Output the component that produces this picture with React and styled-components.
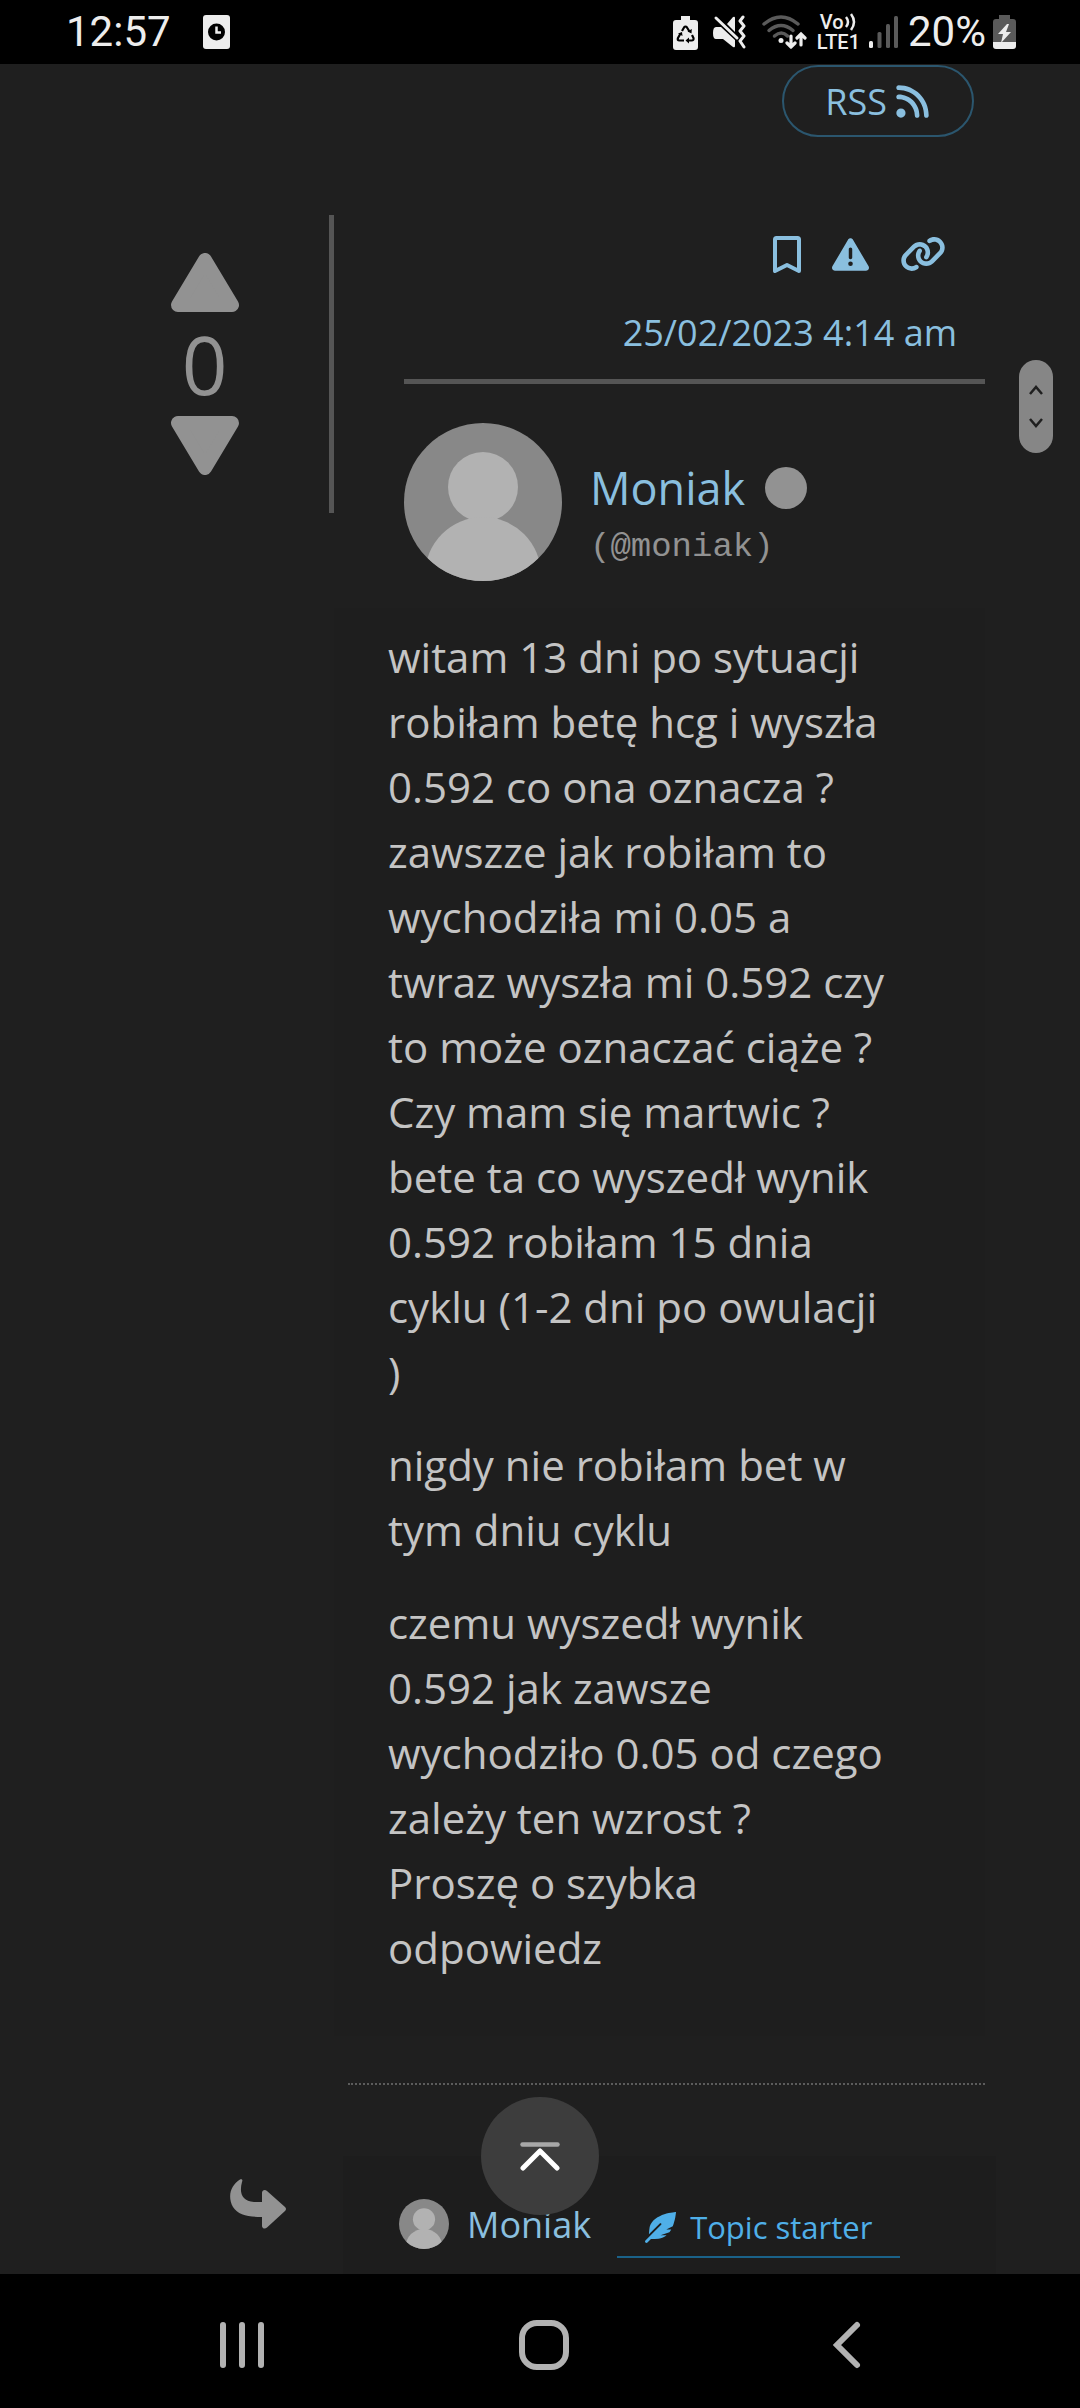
import styled, { createGlobalStyle } from "styled-components"
import { FaTriangleExclamation, FaLink, FaRss } from "react-icons/fa6"
import { FaFeatherAlt } from "react-icons/fa"

const GlobalStyle = createGlobalStyle`
    * {
        box-sizing: border-box;
    }

    body {
        margin: 0;
        background-color: #1f1f1f;
        font-family: "Open Sans", "Noto Sans", sans-serif;
        color: #c4c4c4;
    }

    button {
        padding: 0;
        border: none;
        background: none;
        color: inherit;
        font: inherit;
        cursor: pointer;
    }

    a {
        color: #8abfdf;
        text-decoration: none;
    }

    svg {
        display: block;
    }
`

const Page = styled.div`
    min-height: 100vh;
    display: flex;
    flex-direction: column;
    position: relative;
`

const StatusBar = styled.header`
    height: 64px;
    padding: 0 64px 0 66px;
    display: flex;
    align-items: center;
    justify-content: space-between;
    background-color: black;
    color: #ededed;
    font-family: Roboto, sans-serif;
    font-size: 42px;
    line-height: 64px;
`

const StatusGroup = styled.div`
    display: flex;
    align-items: center;
    gap: ${({gap}) => gap}px;
`

const Carrier = styled.div`
    display: flex;
    flex-direction: column;
    font-size: 20px;
    font-weight: 500;
    line-height: 20px;
`

const CarrierTop = styled.span`
    display: flex;
    align-items: center;
    padding-left: 3px;
`

const Main = styled.main`
    flex: 1;
    padding-right: 95px;
`

const Toolbar = styled.div`
    display: flex;
    justify-content: flex-end;
    padding: 1px 11px 0 0;
`

const RssLink = styled.a`
    height: 72px;
    padding: 0 41px;
    display: flex;
    align-items: center;
    gap: 7px;
    border: 2px solid #2b566e;
    border-radius: 36px;
    font-size: 36px;
`

const Post = styled.article`
    display: flex;
    align-items: flex-start;
    margin-top: 78px;
`

const VoteBox = styled.div`
    width: 334px;
    padding: 38px 0 38px 80px;
    display: flex;
    flex-direction: column;
    align-items: center;
    border-right: 5px solid #555;
    color: #929292;
`

const VoteCount = styled.span`
    font-size: 80px;
    line-height: 104px;
`

const PostMain = styled.div`
    flex: 1;
    min-width: 0;
`

const PostHead = styled.div`
    margin-left: 70px;
    padding: 20px 0 20px;
    display: flex;
    flex-direction: column;
    align-items: flex-end;
    border-bottom: 5px solid #555;
`

const Actions = styled.div`
    height: 38px;
    padding-right: 39px;
    display: flex;
    align-items: center;
    gap: 31px;
    color: #8abfdf;
`

const PostDate = styled.a`
    margin-top: 34px;
    padding-right: 28px;
    font-size: 36px;
    line-height: 52px;
`

const Author = styled.div`
    margin: 39px 0 27px 70px;
    display: flex;
    align-items: flex-end;
    gap: 28px;
`

const AuthorInfo = styled.div`
    padding-bottom: 7px;
`

const AuthorName = styled.div`
    display: flex;
    align-items: center;
    gap: 20px;
    font-size: 45px;
    line-height: 64px;
`

const Offline = styled.span`
    width: 42px;
    height: 42px;
    border-radius: 50%;
    background-color: #929292;
`

const Handle = styled.div`
    color: #929292;
    font-family: "Liberation Mono", monospace;
    font-size: 34px;
    line-height: 54px;
`

const PostBody = styled.div`
    padding: 16px 98px 28px 54px;
    background-color: #1e1e1e;
    font-size: 42px;
    line-height: 65px;

    &>p {
        margin: 0 0 28px;
    }
`

const Separator = styled.hr`
    margin: 47px 0 0 14px;
    border: none;
    border-top: 2px dotted #5c5c5c;
`

const Reply = styled.article`
    display: flex;
    align-items: stretch;
    margin: 71px -11px 0 0;
`

const ReplyAside = styled.div`
    width: 343px;
    padding: 23px 56px 0 0;
    display: flex;
    justify-content: flex-end;
    color: #929292;
`

const ReplyBox = styled.div`
    flex: 1;
    height: 118px;
    padding: 26px 0 0 56px;
    display: flex;
    align-items: flex-start;
    background-color: #1d1d1d;
`

const ReplyAuthor = styled.a`
    height: 84px;
    display: flex;
    align-items: center;
    gap: 18px;
    font-size: 36px;
`

const TopicStarter = styled.span`
    height: 76px;
    margin-left: 26px;
    padding: 16px 28px 0;
    display: flex;
    align-items: center;
    gap: 14px;
    border-bottom: 2px solid #1a6289;
    color: #4fafe8;
    font-size: 31px;
`

const ScrollThumb = styled.div`
    position: absolute;
    top: 360px;
    right: 27px;
    width: 34px;
    height: 93px;
    border-radius: 17px;
    background-color: #868686;
`

const ToTop = styled.button`
    position: absolute;
    bottom: 194px;
    left: 50%;
    width: 118px;
    height: 118px;
    margin-left: -59px;
    border-radius: 50%;
    background-color: #3d3d3d;
    display: flex;
    align-items: center;
    justify-content: center;
`

const NavBar = styled.nav`
    height: 135px;
    padding: 7px 218px 0;
    display: flex;
    align-items: center;
    justify-content: space-between;
    background-color: black;
    color: #b2b2b2;
`

const paragraphs = [
    "witam 13 dni po sytuacji robiłam betę hcg i wyszła 0.592 co ona oznacza ? zawszze jak robiłam to wychodziła mi 0.05 a twraz wyszła mi 0.592 czy to może oznaczać ciąże ? Czy mam się martwic ? bete ta co wyszedł wynik 0.592 robiłam 15 dnia cyklu (1-2 dni po owulacji )",
    "nigdy nie robiłam bet w tym dniu cyklu",
    "czemu wyszedł wynik 0.592 jak zawsze wychodziło 0.05 od czego zależy ten wzrost ? Proszę o szybka odpowiedz"
]

const Avatar = ({size, id}) => {
    return <svg width={size} height={size} viewBox="0 0 158 158">
        <clipPath id={id}><circle cx="79" cy="79" r="79" /></clipPath>
        <g clipPath={`url(#${id})`}>
            <rect width="158" height="158" fill="#888" />
            <circle cx="79" cy="64" r="35" fill="#b2b2b2" />
            <circle cx="79" cy="152" r="58" fill="#b2b2b2" />
        </g>
    </svg>
}

const Triangle = ({down}) => {
    return <svg width="70" height="59" viewBox="0 0 70 59">
        <path
            transform={down ? "rotate(180 35 29.5)" : undefined}
            d="M8 52 35 7 62 52Z"
            fill="currentColor" stroke="currentColor" strokeWidth="14" strokeLinejoin="round"
        />
    </svg>
}

const ClockIcon = () => {
    return <svg width="27" height="34" viewBox="0 0 27 34">
        <rect width="27" height="34" rx="3" fill="currentColor" />
        <circle cx="13.500" cy="17" r="8.500" fill="black" />
        <path d="M13.500 11.500V17.500H18" fill="none" stroke="currentColor" strokeWidth="2.500" />
    </svg>
}

const RecycleBattery = () => {
    return <svg width="25" height="35" viewBox="0 0 25 35">
        <path d="M8 1h9v4h5a3 3 0 0 1 3 3v24a3 3 0 0 1-3 3H3a3 3 0 0 1-3-3V8a3 3 0 0 1 3-3h5z" fill="currentColor" />
        <g fill="none" stroke="black" strokeWidth="2.200">
            <path d="M9 16l2-3.500q1.500-2 3 0l2.500 4" />
            <path d="M19 20l1.500 3q.5 2.500-2 2.500h-4" />
            <path d="M11 25.500H6.500q-2.500 0-1.500-2.500l2.500-4.500" />
        </g>
        <path d="M18.800 14l-.3 4.500-4-2zM16 22.500v6l-3.500-3zM9.500 21l-.5-4-4 1.500z" fill="black" />
    </svg>
}

const MuteIcon = () => {
    return <svg width="34" height="34" viewBox="0 0 34 34">
        <path d="M3 12h5l14 13v6q0 2-2 1L10 24H3q-3 0-3-6t3-6zM14 9l6-7q2-1 2 1v14z" fill="currentColor" />
        <path d="M3 3l21 20" stroke="currentColor" strokeWidth="3" strokeLinecap="round" />
        <path d="M30 2l-3 4 4 5-4 5 4 5-4 5 4 6" fill="none" stroke="currentColor" strokeWidth="3" strokeLinecap="round" strokeLinejoin="round" />
    </svg>
}

const WifiIcon = () => {
    return <svg width="45" height="34" viewBox="0 0 45 34">
        <g fill="none" stroke="#5a5a5a" strokeWidth="3.500" strokeLinecap="round">
            <path d="M2 9q17-14 34 0" />
            <path d="M7 15.500q12-10 24 0" />
            <path d="M12.500 21q7-6 13 0" />
        </g>
        <circle cx="19" cy="25.500" r="2.500" fill="currentColor" />
        <g fill="none" stroke="currentColor" strokeWidth="3.200" strokeLinecap="round">
            <path d="M29 21v11M25 28l4 4 4-4" />
            <path d="M39 30V19M35 23l4-4 4 4" />
        </g>
    </svg>
}

const SignalIcon = () => {
    return <svg width="29" height="32" viewBox="0 0 29 32">
        <rect y="25" width="4" height="7" rx="1.500" fill="currentColor" />
        <rect x="8.500" y="16" width="4" height="16" rx="1.500" fill="#5a5a5a" />
        <rect x="17" y="8" width="4" height="24" rx="1.500" fill="#5a5a5a" />
        <rect x="25" y="0" width="4" height="32" rx="1.500" fill="#5a5a5a" />
    </svg>
}

const BatteryIcon = () => {
    return <svg width="23" height="34" viewBox="0 0 23 34">
        <path d="M6 0h11v4h3a3 3 0 0 1 3 3v20H0V7a3 3 0 0 1 3-3h3z" fill="#5a5a5a" />
        <path d="M0 27h23v4a3 3 0 0 1-3 3H3a3 3 0 0 1-3-3z" fill="currentColor" />
        <path d="M14 9 5 19h5L8 28l10-11h-5l3-8z" fill="currentColor" />
    </svg>
}

const BookmarkIcon = () => {
    return <svg width="28" height="37" viewBox="0 0 28 37">
        <path d="M2 3.500Q2 2 3.500 2h21Q26 2 26 3.500V35L14 29 2 35Z" fill="none" stroke="currentColor" strokeWidth="4" strokeLinejoin="round" />
    </svg>
}

const ReplyArrow = () => {
    return <svg width="57" height="50" viewBox="0 0 57 50">
        <path d="M10 .5C12 0 13 1 12 3 9 14 12 22 24 23H32V14C32 11 35 10 37 12L55 28Q57 30 55 32L37 48.500C35 50.500 32 49.500 32 47V38C18 38 8 36 3 28-3 17 1 6 10 .5Z" fill="currentColor" />
    </svg>
}

const App = () => {
    return <Page>
        <GlobalStyle />
        <StatusBar>
            <StatusGroup gap={32}>
                <span>12:57</span>
                <ClockIcon />
            </StatusGroup>
            <StatusGroup gap={10}>
                <StatusGroup gap={15}>
                    <RecycleBattery />
                    <MuteIcon />
                    <WifiIcon />
                </StatusGroup>
                <StatusGroup gap={9}>
                    <Carrier>
                        <CarrierTop>
                            Vo
                            <svg width="14" height="18" viewBox="0 0 14 18">
                                <path d="M2 4q4 5 0 10M7 1q6 8 0 16" fill="none" stroke="currentColor" strokeWidth="2.500" />
                            </svg>
                        </CarrierTop>
                        <span>LTE1</span>
                    </Carrier>
                    <SignalIcon />
                </StatusGroup>
                <StatusGroup gap={7}>
                    <span>20%</span>
                    <BatteryIcon />
                </StatusGroup>
            </StatusGroup>
        </StatusBar>

        <Main>
            <Toolbar>
                <RssLink href="#rss">RSS <FaRss size={37} /></RssLink>
            </Toolbar>

            <Post>
                <VoteBox>
                    <button aria-label="Vote up"><Triangle /></button>
                    <VoteCount>0</VoteCount>
                    <button aria-label="Vote down"><Triangle down /></button>
                </VoteBox>
                <PostMain>
                    <PostHead>
                        <Actions>
                            <button aria-label="Bookmark"><BookmarkIcon /></button>
                            <button aria-label="Report"><FaTriangleExclamation size={37} /></button>
                            <button aria-label="Link"><FaLink size={46} /></button>
                        </Actions>
                        <PostDate href="#post">25/02/2023 4:14 am</PostDate>
                    </PostHead>
                    <Author>
                        <Avatar size={158} id="avatar" />
                        <AuthorInfo>
                            <AuthorName>
                                <a href="#moniak">Moniak</a>
                                <Offline />
                            </AuthorName>
                            <Handle>(@moniak)</Handle>
                        </AuthorInfo>
                    </Author>
                    <PostBody>
                        {
                            paragraphs.map((text, index) => <p key={index}>{ text }</p>)
                        }
                    </PostBody>
                    <Separator />
                </PostMain>
            </Post>

            <Reply>
                <ReplyAside><ReplyArrow /></ReplyAside>
                <ReplyBox>
                    <ReplyAuthor href="#moniak">
                        <Avatar size={50} id="avatar-reply" />
                        Moniak
                    </ReplyAuthor>
                    <TopicStarter><FaFeatherAlt size={31} /> Topic starter</TopicStarter>
                </ReplyBox>
            </Reply>
        </Main>

        <NavBar>
            <button aria-label="Recents">
                <svg width="48" height="50" viewBox="0 0 48 50">
                    <path d="M5 5v40M24 5v40M43 5v40" stroke="currentColor" strokeWidth="6" strokeLinecap="round" />
                </svg>
            </button>
            <button aria-label="Home">
                <svg width="50" height="50" viewBox="0 0 50 50">
                    <rect x="3" y="3" width="44" height="44" rx="15" fill="none" stroke="currentColor" strokeWidth="6" />
                </svg>
            </button>
            <button aria-label="Back">
                <svg width="40" height="50" viewBox="0 0 40 50">
                    <path d="M35 5 15 25l20 20" fill="none" stroke="currentColor" strokeWidth="6" strokeLinecap="round" />
                </svg>
            </button>
        </NavBar>

        <ScrollThumb>
            <svg width="34" height="93" viewBox="0 0 34 93">
                <path d="M11 34l6-7 6 7M11 59l6 7 6-7" fill="none" stroke="#1f1f1f" strokeWidth="2.500" />
            </svg>
        </ScrollThumb>
        <ToTop aria-label="Scroll to top">
            <svg width="40" height="30" viewBox="0 0 40 30">
                <path d="M2.500 3.500h35" stroke="#a8a8a8" strokeWidth="4.500" strokeLinecap="round" />
                <path d="M3 27 20 10l17 17" fill="none" stroke="white" strokeWidth="5" strokeLinecap="round" strokeLinejoin="round" />
            </svg>
        </ToTop>
    </Page>
}

export default App
